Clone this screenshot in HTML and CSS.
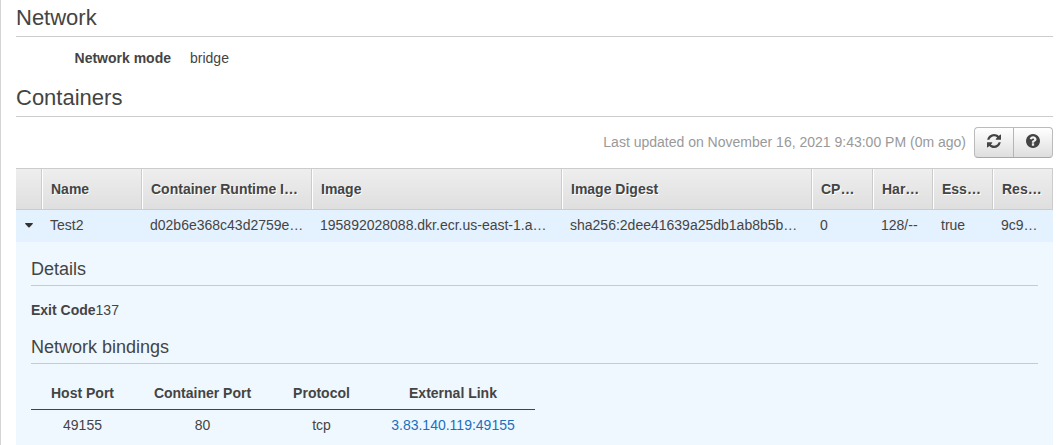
FILE: index.html
```html
<!DOCTYPE html>
<html lang="en">
<head>
<meta charset="utf-8">
<title>Task details</title>
<link rel="stylesheet" href="styles.css">
</head>
<body>
<main class="page">
  <h2 class="section-title">Network</h2>
  <dl class="field">
    <dt>Network mode</dt>
    <dd>bridge</dd>
  </dl>

  <h2 class="section-title">Containers</h2>
  <div class="toolbar">
    <span class="updated">Last updated on November 16, 2021 9:43:00 PM (0m ago)</span>
    <div class="button-group">
      <button class="button" type="button" aria-label="Refresh">
        <svg class="icon refresh" viewBox="0 0 1536 1536"><path transform="translate(0 -128)" d="M1511 1056q0 5-1 7-64 268-268 434.500t-478 166.500q-146 0-282.500-55t-243.500-157l-129 129q-19 19-45 19t-45-19-19-45v-448q0-26 19-45t45-19h448q26 0 45 19t19 45-19 45l-137 137q71 66 161 102t187 36q134 0 250-65t186-179q11-17 53-117 8-23 30-23h192q13 0 22.500 9.500t9.500 22.500zm25-800v448q0 26-19 45t-45 19h-448q-26 0-45-19t-19-45 19-45l138-138q-148-137-349-137-134 0-250 65t-186 179q-11 17-53 117-8 23-30 23h-199q-13 0-22.500-9.500t-9.500-22.500v-7q65-268 270-434.500t480-166.500q146 0 284 55.500t245 156.500l130-129q19-19 45-19t45 19 19 45z"/></svg>
      </button>
      <button class="button" type="button" aria-label="Help">
        <svg class="icon" viewBox="128 128 1536 1536"><path d="M1024 1376v-192q0-14-9-23t-23-9h-192q-14 0-23 9t-9 23v192q0 14 9 23t23 9h192q14 0 23-9t9-23zm256-672q0-88-55.500-163t-138.500-116-170-41q-243 0-371 213-15 24 8 42l132 100q7 6 19 6 16 0 25-12 53-68 86-92 34-24 86-24 48 0 85.500 26t37.500 59q0 38-20 61t-68 45q-63 28-115.500 86.500t-52.500 125.500v36q0 14 9 23t23 9h192q14 0 23-9t9-23q0-19 21.500-49.500t54.500-49.500q32-18 49-28.500t46-35 44.500-48 28-60.500 12.500-81zm384 192q0 209-103 385.500t-279.500 279.500-385.500 103-385.500-103-279.500-279.500-103-385.500 103-385.500 279.500-279.500 385.500-103 385.500 103 279.500 279.500 103 385.500z"/></svg>
      </button>
    </div>
  </div>

  <section class="grid">
    <div class="grid-row grid-head">
      <span></span>
      <span>Name</span>
      <span>Container Runtime I…</span>
      <span>Image</span>
      <span>Image Digest</span>
      <span>CP…</span>
      <span>Har…</span>
      <span>Ess…</span>
      <span>Res…</span>
    </div>
    <div class="grid-row grid-item">
      <span class="toggle"><svg class="caret" viewBox="0 0 8 5"><path d="M.6 0h6.800q.9.100.3 1L4.600 4.200q-.6.500-1.200 0L.3 1Q-.3.100.6 0z"/></svg></span>
      <span>Test2</span>
      <span>d02b6e368c43d2759e…</span>
      <span>195892028088.dkr.ecr.us-east-1.a…</span>
      <span>sha256:2dee41639a25db1ab8b5b…</span>
      <span>0</span>
      <span>128/--</span>
      <span>true</span>
      <span>9c9…</span>
    </div>
    <div class="panel">
      <h3 class="panel-title">Details</h3>
      <p class="exit"><b>Exit Code</b>137</p>
      <h3 class="panel-title">Network bindings</h3>
      <table class="bindings">
        <thead>
          <tr><th class="host">Host Port</th><th class="port">Container Port</th><th class="protocol">Protocol</th><th class="link">External Link</th></tr>
        </thead>
        <tbody>
          <tr><td>49155</td><td>80</td><td>tcp</td><td><a href="#">3.83.140.119:49155</a></td></tr>
        </tbody>
      </table>
    </div>
  </section>
</main>
</body>
</html>
```

FILE: styles.css
```css
* {
  box-sizing: border-box;
}

body {
  margin: 0;
  height: 445px;
  overflow: hidden;
  background: #fff;
  color: #444;
  font: 14px/20px "Liberation Sans", Arial, sans-serif;
}

.page {
  height: 445px;
  overflow: hidden;
  padding: 0 6px 0 15px;
  border-left: 1px solid #d5d5d5;
}

.section-title {
  height: 37px;
  margin: 0;
  padding-top: 3px;
  border-bottom: 1px solid #ccc;
  font-size: 22px;
  font-weight: 400;
  line-height: 30px;
}

.field {
  display: flex;
  gap: 19px;
  height: 43px;
  margin: 0;
  padding-top: 11px;
}

.field dt {
  width: 155px;
  text-align: right;
  font-weight: 700;
}

.field dd {
  margin: 0;
}

.toolbar {
  display: flex;
  justify-content: flex-end;
  gap: 8px;
  height: 51px;
  padding-top: 10px;
}

.updated {
  color: #999;
  line-height: 30px;
}

.button-group {
  display: flex;
  width: 79px;
  height: 31px;
  overflow: hidden;
  border: 1px solid #bbb;
  border-bottom-color: #a8a8a8;
  border-radius: 4px;
  background: linear-gradient(#fff, #dedede);
}

.button {
  display: flex;
  flex: 1;
  align-items: center;
  justify-content: center;
  padding: 0 0 3px;
  border: 0;
  background: none;
  color: #444;
}

.button + .button {
  border-left: 1px solid #b5b5b5;
}

.icon {
  width: 14px;
  height: 14px;
  fill: currentColor;
}

.grid-row {
  display: grid;
  grid-template-columns: 26px 100px 170px 250px 250px 61px 60px 60px 60px;
}

.grid-head {
  height: 42px;
  border-top: 1px solid #ccc;
  border-bottom: 1px solid #ccc;
  background: linear-gradient(#eee, #dfdfdf);
  font-weight: 700;
  line-height: 40px;
  text-shadow: 1px 1px 0 #fff;
}

.grid-head span {
  padding-left: 8px;
  border-left: 1px solid #fff;
  border-right: 1px solid #ccc;
  white-space: nowrap;
}

.grid-head span:first-child {
  border-left: 0;
}

.grid-item {
  height: 32px;
  background: #e4f1fe;
  line-height: 30px;
}

.grid-item span {
  padding-left: 8px;
  white-space: nowrap;
}

.grid-item .toggle {
  display: flex;
  align-items: center;
  padding: 0 0 2px 9px;
}

.caret {
  width: 8px;
  height: 5px;
  fill: #333;
}

.panel {
  height: 220px;
  padding: 12px 15px 0;
  background: #f0f8ff;
}

.panel-title {
  height: 32px;
  margin: 0;
  border-bottom: 1px solid #c2ccd3;
  font-size: 18px;
  font-weight: 400;
  line-height: 30px;
}

.exit {
  height: 46px;
  margin: 0;
  padding-top: 14px;
}

.bindings {
  width: 504px;
  margin-top: 13px;
  border-collapse: separate;
  border-spacing: 0;
  table-layout: fixed;
  text-align: center;
}

.bindings th {
  height: 33px;
  padding: 0;
  border-bottom: 1px solid #444;
}

.bindings td {
  height: 30px;
  padding: 0;
}

.bindings th:last-child,
.bindings td:last-child {
  padding-right: 1px;
}

.host {
  width: 103px;
}

.port {
  width: 137px;
}

.protocol {
  width: 101px;
}

.link {
  width: 163px;
}

.bindings a {
  color: #1a6fc0;
  text-decoration: none;
}
```
